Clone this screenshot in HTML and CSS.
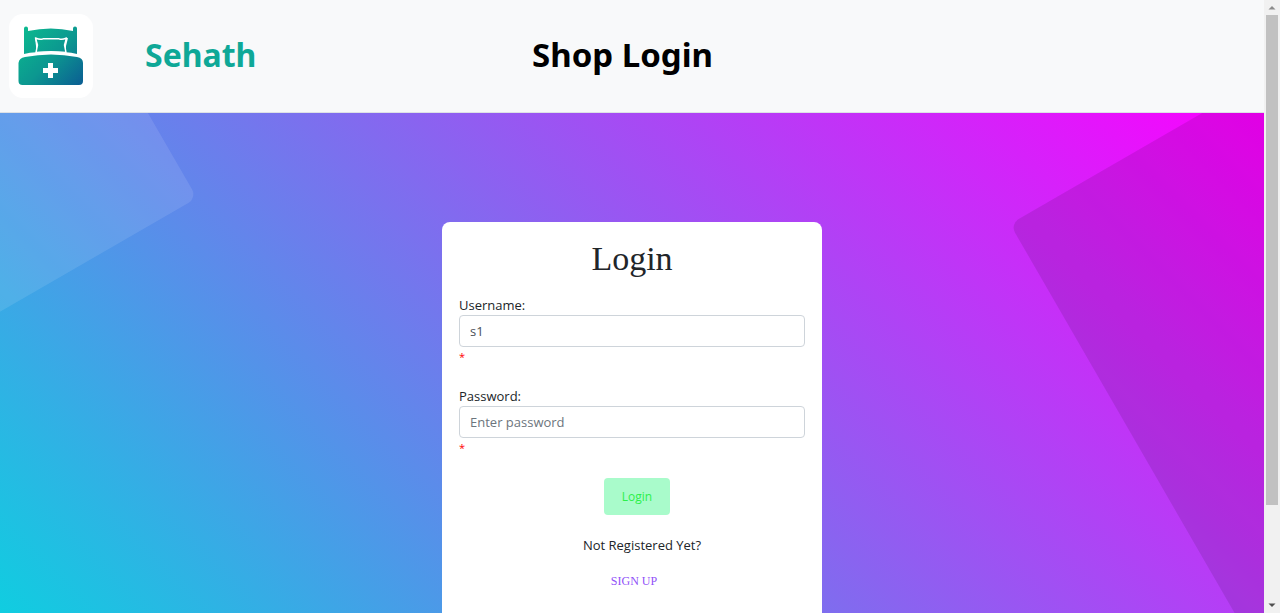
FILE: index.html
```html
<!DOCTYPE html>
<html lang="en">
<head>
<meta charset="utf-8">
<meta name="viewport" content="width=device-width, initial-scale=1">
<title>Shop Login</title>
<link rel="stylesheet" href="styles.css">
</head>
<body>
<div class="page">
  <header class="topbar">
    <a class="brand" href="#">
      <svg class="logo" viewBox="0 0 84 84" aria-hidden="true">
        <defs>
          <linearGradient id="bed" gradientUnits="userSpaceOnUse" x1="14" y1="16" x2="72" y2="74">
            <stop offset="0" stop-color="#0bb88f"/>
            <stop offset=".5" stop-color="#0c9790"/>
            <stop offset="1" stop-color="#0b5c93"/>
          </linearGradient>
        </defs>
        <rect width="84" height="84" rx="14" fill="#fff"/>
        <path fill="url(#bed)" d="M15 40V14.500a2 2 0 0 1 4 0V17Q42 12 64 17V14.500a2 2 0 0 1 4 0V40Q62 38.500 57 38.200V32L59 24Q53 25.500 50 25H34Q31 25.500 26 24L27 32V38.200Q21 38.500 15 40Z"/>
        <path fill="url(#bed)" stroke="#fff" stroke-width="1.400" stroke-linejoin="round" d="M27 38.500L28.500 31L26.500 24Q31 26 34 24.800H50Q53 26 57.500 24L55.500 31L57 38.500Q42 37 27 38.500Z"/>
        <path fill="url(#bed)" d="M9.500 49Q10 44 16 43Q42 38 68 43Q74 44 74 49V67Q74 71 70 71H13.500Q9.500 71 9.500 67Z"/>
        <path fill="#fff" d="M39 49h5v5h5v5h-5v5h-5v-5h-5v-5h5z"/>
      </svg>
      <span class="brand-name">Sehath</span>
    </a>
    <h1 class="page-title">Shop Login</h1>
  </header>
  <main class="hero">
    <form class="card">
      <h2 class="card-title">Login</h2>
      <div class="field">
        <label for="username">Username:</label>
        <input id="username" type="text" value="s1">
        <span class="required">*</span>
      </div>
      <div class="field">
        <label for="password">Password:</label>
        <input id="password" type="password" placeholder="Enter password">
        <span class="required">*</span>
      </div>
      <div class="actions"><button class="submit" type="button">Login</button></div>
      <p class="prompt">Not Registered Yet?</p>
      <p class="signup"><a href="#">SIGN UP</a></p>
    </form>
  </main>
</div>
<div class="scrollbar" aria-hidden="true">
  <svg class="arrow" viewBox="0 0 16 15"><path d="M4.500 9.500h7L8 6z" fill="#8b8b8b"/></svg>
  <div class="track"><div class="thumb"></div></div>
  <svg class="arrow" viewBox="0 0 16 15"><path d="M4.500 5.500h7L8 9z" fill="#505050"/></svg>
</div>
</body>
</html>
```
FILE: styles.css
```css
* { box-sizing: border-box; }

body {
  margin: 0;
  height: 100vh;
  display: grid;
  grid-template-columns: 1fr 16px;
  overflow: hidden;
  font-family: "Open Sans", "Noto Sans", sans-serif;
  font-size: 13px;
  line-height: 20px;
  color: #212529;
}

.page { height: 100vh; overflow: hidden; }

.topbar {
  display: grid;
  grid-template-columns: 1fr auto 1fr;
  align-items: center;
  padding: 14px 28px 14px 9px;
  background: #f8f9fa;
  border-bottom: 1px solid #dee2e6;
}

.brand {
  display: flex;
  align-items: center;
  gap: 52px;
  color: #0fa897;
  text-decoration: none;
}

.logo { width: 84px; height: 84px; display: block; }

.brand-name, .page-title {
  margin: 0;
  padding-bottom: 3px;
  font-family: "Noto Sans", "Open Sans", sans-serif;
  font-size: 33px;
  font-weight: 700;
  line-height: 40px;
}

.brand-name { font-size: 32px; }
.page-title { color: #000; }

.hero {
  position: relative;
  overflow: hidden;
  min-height: 614px;
  padding: 109px 16px;
  display: flex;
  justify-content: center;
  align-items: stretch;
  background: linear-gradient(45deg, #00dbde, #fc00ff);
}

/* Tilted translucent panels behind the card */
.hero::before, .hero::after {
  content: "";
  position: absolute;
  width: 900px;
  height: 900px;
  border-radius: 10px;
  transform: rotate(-30deg);
}

.hero::before {
  right: calc(100% - 197px);
  bottom: calc(100% - 85px);
  transform-origin: bottom right;
  background: rgba(255, 255, 255, .1);
}

.hero::after {
  left: calc(100% - 254px);
  top: 111px;
  transform-origin: top left;
  background: rgba(0, 0, 0, .1);
}

.card {
  width: 380px;
  padding: 16px 17px 32px;
  background: #fff;
  border-radius: 8px;
}

.card-title {
  margin: 0 0 16px;
  font-family: "Liberation Serif", serif;
  font-size: 34px;
  font-weight: 400;
  line-height: 42px;
  text-align: center;
}

.field { margin-bottom: 20px; }
.field label { display: block; line-height: 19px; }

.field input {
  display: block;
  width: 100%;
  height: 32px;
  padding: 4px 10px;
  border: 1px solid #ced4da;
  border-radius: 4px;
  background: #fff;
  font: inherit;
  color: #495057;
}

.field input::placeholder { color: #6c757d; opacity: 1; }

.required {
  display: block;
  font-size: 11px;
  line-height: 20px;
  color: #f00;
}

.actions { padding-left: 10px; text-align: center; }

.submit {
  display: inline-block;
  vertical-align: top;
  width: 66px;
  height: 37px;
  padding: 0;
  border: 0;
  border-radius: 4px;
  background: #a9fbcb;
  color: #2bf04a;
  font: inherit;
  font-size: 12px;
}

.prompt {
  margin: 20px 0 16px;
  padding-left: 20px;
  text-align: center;
}

.signup {
  margin: 0;
  padding-left: 4px;
  font-family: "Liberation Serif", serif;
  font-size: 12px;
  text-align: center;
}

.signup a { color: #9152f8; text-decoration: none; }

.scrollbar {
  display: flex;
  flex-direction: column;
  padding: 0 2px;
  background: #f1f1f1;
}

.arrow { width: 16px; height: 15px; margin: 0 -2px; display: block; }
.track { flex: 1; }
.thumb { height: 84%; background: #c1c1c1; }
```
